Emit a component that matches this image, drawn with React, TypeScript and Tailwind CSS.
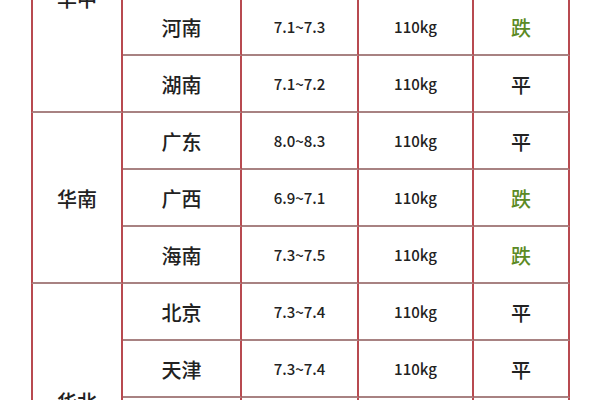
type Row = { region?: string; span?: number; prov: string; price: string; weight: string; trend: '平' | '跌' | '涨' }

const rows: Row[] = [
  { region: '华中', span: 4, prov: '湖北', price: '7.2~7.4', weight: '110kg', trend: '平' },
  { prov: '江西', price: '7.3~7.5', weight: '110kg', trend: '平' },
  { prov: '河南', price: '7.1~7.3', weight: '110kg', trend: '跌' },
  { prov: '湖南', price: '7.1~7.2', weight: '110kg', trend: '平' },
  { region: '华南', span: 3, prov: '广东', price: '8.0~8.3', weight: '110kg', trend: '平' },
  { prov: '广西', price: '6.9~7.1', weight: '110kg', trend: '跌' },
  { prov: '海南', price: '7.3~7.5', weight: '110kg', trend: '跌' },
  { region: '华北', span: 4, prov: '北京', price: '7.3~7.4', weight: '110kg', trend: '平' },
  { prov: '天津', price: '7.3~7.4', weight: '110kg', trend: '平' },
  { prov: '河北', price: '7.2~7.4', weight: '110kg', trend: '平' },
  { prov: '山西', price: '7.0~7.2', weight: '110kg', trend: '平' },
]

const cell = 'flex items-center justify-center pt-[2px] border-r-2 border-b-2 border-r-[#b84a50] border-b-[#a88282]'

export default function App() {
  return (
    <div className="w-[600px] h-[400px] overflow-hidden bg-white text-[#222] font-['Noto_Sans_CJK_SC','Noto_Sans',sans-serif]">
      <div className="ml-[31px] -mt-[115px] grid grid-cols-[92px_119px_117px_115px_96px] auto-rows-[57px]">
        {rows.map((r) => (
          <div key={r.prov} className="contents">
            {r.region && (
              <div
                className={`${cell} border-l-2 border-l-[#b84a50] text-[20px] font-medium ${
                  r.span === 4 ? 'row-span-4' : 'row-span-3'
                } ${r.region === '华北' ? 'pt-[10px]' : ''}`}
              >
                {r.region}
              </div>
            )}
            <div className={`${cell} text-[20px] font-medium`}>{r.prov}</div>
            <div className={`${cell} text-[15px] font-medium`}>{r.price}</div>
            <div className={`${cell} text-[15px] font-medium`}>{r.weight}</div>
            <div
              className={`${cell} text-[20px] font-medium ${r.trend === '跌' ? 'text-[#5b8a24]' : ''}`}
            >
              {r.trend}
            </div>
          </div>
        ))}
      </div>
    </div>
  )
}
